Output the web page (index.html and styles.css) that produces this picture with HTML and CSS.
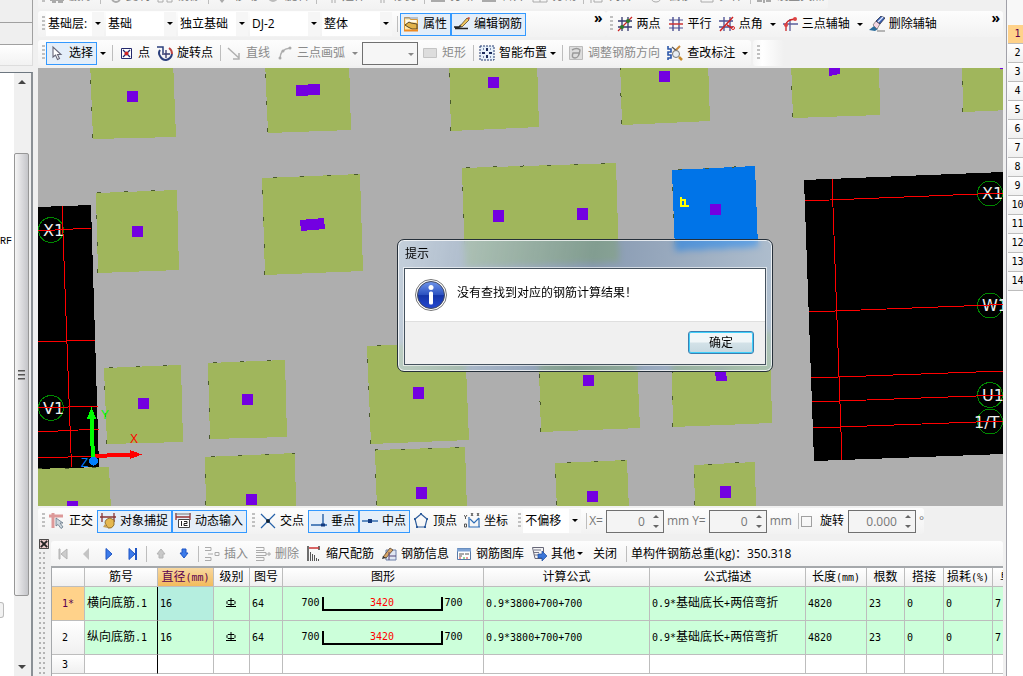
FILE: index.html
```html
<!DOCTYPE html>
<html lang="zh-CN">

<head>
    <meta charset="UTF-8">
    <meta name="viewport" content="width=device-width, initial-scale=1.0">
    <title>编辑钢筋</title>
    <link rel="stylesheet" href="styles.css">
</head>

<body>
    <div class="app">
        <aside class="side">
            <div class="side-head"></div>
            <div class="side-head"></div>
            <div class="side-head light"></div>
            <div class="side-body">
                <div class="side-list"><span>RF</span><i></i></div>
                <div class="scroll">
                    <span class="tri up"></span>
                    <div class="thumb"><i></i><i></i><i></i></div>
                    <span class="tri down"></span>
                </div>
            </div>
        </aside>

        <main class="main">
            <!-- modify tools -->
            <div class="bar-row first">
                <div class="toolbar dim">
                    <span class="grip"></span>
                    <button class="tool"><svg class="icon" viewBox="0 0 16 16"><path d="M1 12h14M3 14h4M9 14h5" stroke="#aaa" stroke-width="2"/></svg>删除</button>
                    <span class="sep"></span>
                    <button class="tool"><svg class="icon" viewBox="0 0 16 16"><circle cx="10" cy="10" r="4" fill="none" stroke="#aaa" stroke-width="2"/></svg>复制</button>
                    <button class="tool"><svg class="icon" viewBox="0 0 16 16"><path d="M1 7h5v7H1zM10 7h5v7h-5z" fill="none" stroke="#aaa"/></svg>镜像</button>
                    <span class="sep"></span>
                    <button class="tool"><svg class="icon" viewBox="0 0 16 16"><path d="M4 10h8l-4 5z" fill="#aaa"/></svg>移动</button>
                    <button class="tool"><svg class="icon" viewBox="0 0 16 16"><circle cx="8" cy="9" r="5" fill="#bbb"/></svg>旋转</button>
                    <span class="sep"></span>
                    <button class="tool"><svg class="icon" viewBox="0 0 16 16"><path d="M10 2v13M13 2v13" stroke="#aaa"/></svg>延伸</button>
                    <button class="tool"><svg class="icon" viewBox="0 0 16 16"><path d="M8 2v13M11 2v13" stroke="#aaa"/></svg>修剪</button>
                    <span class="sep"></span>
                    <button class="tool"><svg class="icon" viewBox="0 0 16 16"><path d="M1 13h14" stroke="#aaa" stroke-width="2"/></svg>打断</button>
                    <button class="tool"><svg class="icon" viewBox="0 0 16 16"><path d="M1 13h14" stroke="#aaa" stroke-width="2"/></svg>合并</button>
                    <button class="tool"><svg class="icon" viewBox="0 0 16 16"><path d="M1 8h14v6H1zM8 8v6" fill="none" stroke="#aaa"/></svg>分割</button>
                    <span class="sep"></span>
                    <button class="tool"><svg class="icon" viewBox="0 0 16 16"><path d="M2 2v13M5 6h8v8H5z" fill="none" stroke="#aaa"/></svg>对齐</button>
                    <span class="space"></span>
                    <button class="tool"><svg class="icon" viewBox="0 0 16 16"><path d="M3 8q0 6 5 6t5-6" fill="none" stroke="#aaa"/></svg>偏移</button>
                    <button class="tool"><svg class="icon" viewBox="0 0 16 16"><path d="M2 6h12v8H2z" fill="none" stroke="#aaa"/></svg>拉伸</button>
                    <span class="sep"></span>
                    <button class="tool"><svg class="icon" viewBox="0 0 16 16"><path d="M1 13h5M10 13h5M8 8v7" stroke="#aaa" stroke-width="2"/></svg>设置夹点</button>
                </div>
            </div>

            <!-- component selection and auxiliary axes -->
            <div class="bar-row">
                <div class="toolbar wide-left">
                    <span class="grip"></span>
                    <span class="combo short"><select aria-label="楼层"><option>基础层:</option></select></span>
                    <span class="combo"><select aria-label="构件类别"><option>基础</option></select></span>
                    <span class="combo"><select aria-label="构件类型"><option>独立基础</option></select></span>
                    <span class="combo"><select aria-label="构件名称"><option>DJ-2</option></select></span>
                    <span class="combo"><select aria-label="单元"><option>整体</option></select></span>
                    <span class="sep"></span>
                    <button class="tool on"><svg class="icon" viewBox="0 0 16 16"><path d="M1.500 1.500h5l1 2h7v11h-13z" fill="#ffe9b0" stroke="#d79a3c"/><path d="M1 2h14" stroke="#8a94a4"/><path d="M3 5h10M3 7h4" stroke="#fff" stroke-width="1.500"/><path d="M2 9l4-3 2 1 6 1v5H9L5 11z" fill="#e2b34a" stroke="#5a4520"/><path d="M1 14.500h14" stroke="#ef8a20" stroke-width="2"/></svg>属性</button>
                    <button class="tool on"><svg class="icon" viewBox="0 0 16 16"><path d="M0 11h5l2-2M1 12.500h13" stroke="#222" stroke-width="1.500" fill="none"/><path d="M6 10l7-8 2 2-7 7z" fill="#f2c65c" stroke="#5b4a2a" stroke-width=".8"/><path d="M13 2l2 2 1-2-1-1z" fill="#c8503c"/><path d="M6 10l-1 2 3-1z" fill="#333"/></svg>编辑钢筋</button>
                    <button class="more" aria-label="更多">»</button>
                </div>
                <div class="toolbar wide-right">
                    <span class="grip"></span>
                    <button class="tool"><svg class="icon" viewBox="0 0 16 16"><path d="M5 1v14M11 1v14M1 5h14M1 11h14" stroke="#33386e" stroke-width="1.300"/><path d="M1 15L15 1" stroke="#c22" stroke-width="1.200"/><circle cx="5" cy="11" r="2" fill="#2a7a2a"/><circle cx="11" cy="5" r="2" fill="#2a7a2a"/></svg>两点</button>
                    <button class="tool"><svg class="icon" viewBox="0 0 16 16"><path d="M5 1v14M11 1v14" stroke="#4a4f92" stroke-width="1.400"/><path d="M1 4h14M1 12h14" stroke="#4a4f92"/><path d="M1 8h14" stroke="#c33" stroke-width="1.500"/></svg>平行</button>
                    <button class="tool"><svg class="icon" viewBox="0 0 16 16"><path d="M5 1v14M11 1v14M0 5h14M0 11h14" stroke="#4a4f92" stroke-width="1.300"/><path d="M1 15L14 1M8 9l5 3" stroke="#c22" stroke-width="1.500"/><circle cx="14" cy="12" r="1.500" fill="none" stroke="#d22"/></svg>点角</button>
                    <button class="drop" aria-label="点角选项"></button>
                    <button class="tool"><svg class="icon" viewBox="0 0 16 16"><path d="M8 3v12M1 8h15" stroke="#5a5f9a" stroke-width="1.300"/><path d="M4 15V9q0-5 9-6" stroke="#c22" stroke-width="1.300" fill="none"/><circle cx="4" cy="9" r="2" fill="#d44"/><circle cx="13" cy="3" r="2" fill="#d44"/></svg>三点辅轴</button>
                    <button class="drop" aria-label="三点辅轴选项"></button>
                    <button class="tool"><svg class="icon" viewBox="0 0 16 16"><path d="M0 14l5-4 4 3-3 2z" fill="#2b6d9c"/><path d="M4 9l3-4 4 3-3 5z" fill="#f3d6e2" stroke="#666" stroke-width=".7"/><path d="M7 5l5-5 4 2-5 6z" fill="#3b62b5" stroke="#223" stroke-width=".7"/><path d="M9 6l5-5" stroke="#dfe9ff" stroke-width="1.500"/><path d="M8 15h8" stroke="#777"/></svg>删除辅轴</button>
                    <button class="more" aria-label="更多">»</button>
                </div>
            </div>

            <!-- drawing tools -->
            <div class="bar-row draw">
                <div class="toolbar">
                    <span class="grip"></span>
                    <button class="tool on"><svg class="icon" viewBox="0 0 16 16"><path d="M4 2v10l2.500-2 2 4.500 2-1-2-4H12z" fill="#fff" stroke="#667" stroke-width="1.100"/></svg>选择</button>
                    <button class="drop" aria-label="选择选项"></button>
                    <span class="sep"></span>
                    <button class="tool"><svg class="icon" viewBox="0 0 16 16"><path d="M3.500 3.500h10v10h-10z" fill="#fff" stroke="#23286c"/><path d="M5 5l7 7M12 5l-7 7" stroke="#23286c" stroke-width="1.300"/><circle cx="8.500" cy="8.500" r="2" fill="#c22"/></svg>点</button>
                    <button class="tool"><svg class="icon" viewBox="0 0 16 16"><path d="M3 5q-2 3 0 6 2 4 6 4 5-1 6-6" fill="none" stroke="#2a3f7c" stroke-width="2"/><path d="M12 3q3 2 3 6" fill="none" stroke="#b44" stroke-width="2"/><path d="M0 2h6v6" fill="none" stroke="#2a3f7c" stroke-width="1.500"/><path d="M9 5v8M5 9h8" stroke="#33386e" stroke-width="1.300"/></svg>旋转点</button>
                    <span class="sep"></span>
                    <button class="tool off"><svg class="icon" viewBox="0 0 16 16"><path d="M2 3l11 10M13 8v6H7" stroke="#b0b0b0" stroke-width="1.500" fill="none"/></svg>直线</button>
                    <button class="tool off"><svg class="icon" viewBox="0 0 16 16"><path d="M3 14q0-10 10-11" stroke="#b0b0b0" stroke-width="1.500" fill="none"/><circle cx="3" cy="13" r="1.500" fill="#aaa"/><circle cx="6" cy="6" r="1.500" fill="#aaa"/><circle cx="13" cy="3" r="1.500" fill="#aaa"/></svg>三点画弧</button>
                    <button class="drop off" aria-label="画弧选项" disabled></button>
                    <span class="combo boxed"><select aria-label="半径" disabled><option></option></select></span>
                    <button class="tool off"><svg class="icon" viewBox="0 0 16 16"><path d="M1.500 3.500h13v9h-13z" fill="#ddd" stroke="#c4c4c4"/></svg>矩形</button>
                    <span class="sep"></span>
                    <button class="tool tight"><svg class="icon" viewBox="0 0 16 16"><path d="M1 1h14v14H1z" fill="#e6f0fa" stroke="#223a70" stroke-dasharray="2 1"/><path d="M8 3v3M8 10v3M3 8h3M10 8h3" stroke="#1b2a5c" stroke-width="2"/><path d="M4 4h1M11 4h1M4 12h1M11 12h1" stroke="#1b2a5c"/></svg>智能布置</button>
                    <button class="drop slim" aria-label="智能布置选项"></button>
                    <span class="sep"></span>
                    <button class="tool off"><svg class="icon" viewBox="0 0 16 16"><path d="M1.500 1.500h13v13h-13z" fill="#ddd" stroke="#bbb"/><path d="M4 5q5-3 8 0-1 8-5 8T5 8h7" fill="none" stroke="#999" stroke-width="1.500"/></svg>调整钢筋方向</button>
                    <button class="tool"><svg class="icon" viewBox="0 0 16 16"><path d="M1 1v3h3v3H1v3h3v3H1v2" fill="none" stroke="#2a56a8" stroke-width="1.600"/><path d="M13 1L6 8" stroke="#c88a3c" stroke-width="2"/><path d="M5 2l6 5" stroke="#555" stroke-width="1.300"/><circle cx="9" cy="9" r="3.500" fill="#e8eef4" stroke="#777"/><path d="M12 12l3 3" stroke="#c78b2c" stroke-width="2.500"/></svg>查改标注</button>
                    <button class="drop" aria-label="查改标注选项"></button>
                </div>
                <div class="toolbar stub"><span class="grip"></span></div>
            </div>

            <div class="canvas">
                <svg class="model" viewBox="38 68 965 438" preserveAspectRatio="xMinYMin slice">
                    <g class="void">
                        <path d="M38 207L91 205L99 467L38 469Z"/>
                        <path d="M804 180L1003 172V454L814 461Z"/>
                    </g>
                    <g class="footing">
                        <path d="M90 60H173L176 137L93 139Z"/>
                        <path d="M265 60H349L351 130L268 133Z"/>
                        <path d="M449 60H537L539 127L451 131Z"/>
                        <path d="M620 60H708L710 121L622 125Z"/>
                        <path d="M791 60H879L880 115L793 118Z"/>
                        <path d="M962 60H1010V110L963 112Z"/>
                        <path d="M96 193L177 190L179 270L98 273Z"/>
                        <path d="M262 178L360 174L363 271L265 275Z"/>
                        <path d="M462 168L616 163L619 262L465 267Z"/>
                        <path d="M104 368L181 365L183 442L107 444Z"/>
                        <path d="M208 363L285 360L287 437L210 439Z"/>
                        <path d="M367 346L465 342L469 440L371 444Z"/>
                        <path d="M538 340L636 336L640 428L541 432Z"/>
                        <path d="M671 335L770 332L772 423L673 427Z"/>
                        <path d="M30 469L109 467L111 510H30Z"/>
                        <path d="M205 457L295 453L296 510H206Z"/>
                        <path d="M375 450L465 447L467 510H377Z"/>
                        <path d="M555 463L627 460L629 510H557Z"/>
                        <path d="M694 465L755 462L756 510H695Z"/>
                    </g>
                    <path class="picked" d="M672 170L755 166L758 247L675 251Z"/>
                    <g class="edge">
                        <path d="M93 138L90 68M268 132L265 68M451 131L449 68M622 124L620 68M793 117L791 68M963 112L962 68"/>
                        <path d="M98 273L96 193L177 190M265 275L262 178L360 174M465 245L462 168L616 163M675 245L672 170L755 166"/>
                        <path d="M107 444L104 368L181 365M210 439L208 363L285 360M371 444L367 346L465 342M541 432L539 371M673 427L672 371"/>
                        <path d="M38 469L109 467M206 505L205 457L295 453M377 505L375 450L465 447M557 505L555 463L627 460M695 505L694 465L755 462"/>
                    </g>
                    <g class="column">
                        <path d="M127 91h11v11h-11zM296 85l24-1v11l-24 1zM488 77h11v11h-11zM659 71h11v11h-11zM829 66h11v8l-11 2zM1000 66h5v3h-5z"/>
                        <path d="M132 226h11v11h-11zM300 220l24-2 1 11-24 2zM493 210h11v12h-11zM577 208h11v12h-11zM710 204h11v11h-11z"/>
                        <path d="M138 398h11v11h-11zM242 394h11v11h-11zM413 387h11v12h-11zM583 375h11v11h-11zM715 371h11l1 10h-11z"/>
                        <path d="M67 501h11v9H67zM246 494h11v11h-11zM416 487h11v12h-11zM587 491h11v11h-11zM720 486h11v12h-11z"/>
                    </g>
                    <g class="bubble">
                        <circle cx="51" cy="230" r="12.500"/><circle cx="51" cy="408" r="12.500"/>
                        <circle cx="990" cy="193.500" r="12.500"/><circle cx="990" cy="305.500" r="12.500"/>
                        <circle cx="990" cy="395" r="12.500"/><circle cx="990" cy="421.500" r="12.500"/>
                    </g>
                    <g class="axis-name">
                        <text x="43" y="236">X1</text><text x="43" y="414">V1</text>
                        <text x="982" y="199">X1</text><text x="982" y="311">W1</text>
                        <text x="982" y="401">U1</text><text x="974" y="428">1/T</text>
                    </g>
                    <g class="axis">
                        <path d="M62 206L71.500 467M38 231L91 228M38 342L95 340M38 408L98 406M38 432L99 429M38 458L99 456"/>
                        <path d="M832 179L842 460M805 201L1003 193M809 312L1003 304.500M811 378L1003 371M812 402L1003 395M813 428L1003 421"/>
                    </g>
                    <path class="hook" d="M681 197v9h8M681 200h4v6"/>
                    <path d="M93 460L91.500 417" stroke="#0f0" stroke-width="4"/>
                    <path d="M91.500 407l4.500 11.500h-9z" fill="#0f0"/>
                    <path d="M95 456L131 454.500" stroke="#f00" stroke-width="4"/>
                    <path d="M130 450l12 4.500-12 4.500z" fill="#f00"/>
                    <circle cx="93.500" cy="461" r="4.500" fill="#0080ff"/>
                    <g class="ucs">
                        <text x="101" y="419" fill="#0f0">Y</text>
                        <text x="130" y="443" fill="#f00">X</text>
                        <text x="81" y="467" fill="#0080ff">Z</text>
                    </g>
                </svg>

                <section class="dialog" role="dialog" aria-labelledby="dlg-title">
                    <h1 id="dlg-title">提示</h1>
                    <div class="dialog-inner">
                        <div class="dialog-msg">
                            <svg class="info" viewBox="0 0 32 32">
                                <defs><linearGradient id="blue" x1="0" y1="0" x2="0" y2="1"><stop offset="0" stop-color="#6f95ea"/><stop offset=".5" stop-color="#2a50c0"/><stop offset=".52" stop-color="#1434a8"/><stop offset="1" stop-color="#2448d0"/></linearGradient></defs>
                                <circle cx="16" cy="16" r="15.500" fill="#fff" stroke="#777"/>
                                <circle cx="16" cy="16" r="13.500" fill="url(#blue)" stroke="#444b60"/>
                                <circle cx="16" cy="8.500" r="2.500" fill="#fff"/>
                                <rect x="14" y="12.500" width="4" height="13" rx="1.500" fill="#fff"/>
                            </svg>
                            <p>没有查找到对应的钢筋计算结果！</p>
                        </div>
                        <div class="dialog-foot"><button class="ok">确定</button></div>
                    </div>
                </section>
            </div>

            <!-- snap and coordinate input -->
            <div class="bar-row snap">
                <div class="toolbar">
                    <span class="grip"></span>
                    <button class="tool"><svg class="icon" viewBox="0 0 16 16"><path d="M0 3h14M4 0v15" stroke="#d99" stroke-width="3"/><path d="M7 5v8l2-1.500 3 4 2-1.500-3-4h3z" fill="#cdd6dc" stroke="#678" stroke-width=".8"/></svg>正交</button>
                    <button class="tool on"><svg class="icon" viewBox="0 0 16 16"><path d="M2 0v9M14 0v9M0 4h16" stroke="#833" stroke-width="1.300"/><path d="M5 10q0-4 5-5l4 2v5q-2 4-6 3z" fill="#e5b850" stroke="#7a5a20" stroke-width=".8"/><path d="M5 11l-2 3 5 1z" fill="#c9a050"/></svg>对象捕捉</button>
                    <button class="tool on"><svg class="icon" viewBox="0 0 16 16"><path d="M1 0v7M15 0v7M1 4h14" stroke="#933" stroke-width="1.300"/><path d="M0 1h16" stroke="#777"/><path d="M3.500 6.500h11v8h-11z" fill="#fff" stroke="#444"/><path d="M6.500 8v5M9 8.500h3v2H9v2h3.500" stroke="#222" fill="none"/></svg>动态输入</button>
                    <span class="grip second"></span>
                    <button class="tool"><svg class="icon" viewBox="0 0 16 16"><path d="M1 1l14 14M15 1L1 15" stroke="#2560a8" stroke-width="1.200"/><circle cx="8" cy="8" r="2" fill="#123"/></svg>交点</button>
                    <button class="tool on"><svg class="icon" viewBox="0 0 16 16"><path d="M0 12h16M12 1v11" stroke="#2560a8" stroke-width="1.400"/><path d="M10 10.500h4v3h-4z" fill="#123a80"/></svg>垂点</button>
                    <button class="tool on"><svg class="icon" viewBox="0 0 16 16"><path d="M0 8h16" stroke="#2560a8" stroke-width="1.400"/><path d="M6 6h4v4H6z" fill="#123a80"/></svg>中点</button>
                    <button class="tool"><svg class="icon" viewBox="0 0 16 16"><path d="M8 1l6 5-2 8H4L2 6z" fill="none" stroke="#2f5d9c" stroke-width="1.200"/><path d="M7 0h2v2H7zM1 5h2v2H1zM13 5h2v2h-2zM3 13h2v2H3zM11 13h2v2h-2z" fill="#2f5d9c"/></svg>顶点</button>
                    <button class="tool"><svg class="icon" viewBox="0 0 16 16"><path d="M5 4v10h11M6 6l4 4 5-5M15 5v9" fill="none" stroke="#2d6db5" stroke-width="1.200"/><path d="M0 2l1.500 2L3 2M1.500 4v2M.5 11h2v3h-2zM7 0l2 3M9 0L7 3M13 0l2 3M15 0l-2 3" fill="none" stroke="#555"/></svg>坐标</button>
                    <span class="grip third"></span>
                    <span class="combo offset"><select aria-label="偏移方式"><option>不偏移</option></select></span>
                    <span class="sep"></span>
                    <label class="field">X=<span class="spin"><input type="text" value="0"></span>mm</label>
                    <label class="field">Y=<span class="spin"><input type="text" value="0"></span>mm</label>
                    <span class="sep"></span>
                    <label class="check"><input type="checkbox">旋转</label>
                    <label class="field last"><span class="spin wide"><input type="text" value="0.000" aria-label="旋转角度"></span>°</label>
                </div>
            </div>

            <div class="bottom">
                <div class="handle">
                    <button class="close" aria-label="关闭"><svg viewBox="0 0 11 11"><path d="M.5 .5h10v10H.5z" fill="#e8c8c8" stroke="#333"/><path d="M2 2l7 7M9 2L2 9" stroke="#222" stroke-width="2"/></svg></button>
                    <span class="dots"></span>
                </div>
                <div class="rebar">
                    <div class="toolbar edit">
                        <button class="nav" aria-label="首条"><svg class="icon" viewBox="0 0 16 16"><path d="M4 3v10h1V3zM12 3v10L6 8z" fill="#ccc" stroke="#b4b4b4"/></svg></button>
                        <button class="nav" aria-label="上一条"><svg class="icon" viewBox="0 0 16 16"><path d="M11 2v12L5 8z" fill="#c4c4c4"/></svg></button>
                        <button class="nav" aria-label="下一条"><svg class="icon" viewBox="0 0 16 16"><path d="M5 2.500v11L11 8z" fill="#3c7bea" stroke="#1e55c4"/></svg></button>
                        <button class="nav" aria-label="末条"><svg class="icon" viewBox="0 0 16 16"><path d="M5 2.500v11L11 8z" fill="#3c7bea" stroke="#1e55c4"/><path d="M12 2v12" stroke="#1e55c4" stroke-width="2"/></svg></button>
                        <span class="sep"></span>
                        <button class="nav" aria-label="上移"><svg class="icon" viewBox="0 0 16 16"><path d="M8 3l4 5h-2v4H6V8H4z" fill="#c8c8c8" stroke="#b4b4b4"/></svg></button>
                        <button class="nav" aria-label="下移"><svg class="icon" viewBox="0 0 16 16"><path d="M8 12l4-5h-2V3H6v4H4z" fill="#3c7bea" stroke="#1e55c4"/></svg></button>
                        <span class="sep"></span>
                        <button class="tool off"><svg class="icon" viewBox="0 0 16 16"><path d="M1 1.500h6v3H1M1 11.500h6v3H1M4 8h5M11 6.500h4v3h-4z" fill="none" stroke="#aaa"/></svg>插入</button>
                        <button class="tool off"><svg class="icon" viewBox="0 0 16 16"><path d="M1 1.500h8v3H1M1 6.500h10v3H1M1 11.500h8v3H1M11 8h5M14 6v4" fill="none" stroke="#aaa"/></svg>删除</button>
                        <button class="tool"><svg class="icon" viewBox="0 0 16 16"><path d="M2 0v15M13 0v4" stroke="#222" stroke-width="1.300"/><path d="M3 2h10" stroke="#c33" stroke-width="1.300"/><path d="M4.500 6v9M6.500 8v7M8.500 9v6M10.500 12v3M12.500 13v2" stroke="#555"/></svg>缩尺配筋</button>
                        <button class="tool"><svg class="icon" viewBox="0 0 16 16"><path d="M5 4h10v10H5z" fill="#dfe6f2" stroke="#6a7fa8"/><path d="M2 11l7-9 3 2-7 8z" fill="#d9a565" stroke="#543" stroke-width=".8"/><path d="M8 6v8M8 10h7" stroke="#547"/><path d="M1 13l1-3 3 2z" fill="#333"/></svg>钢筋信息</button>
                        <button class="tool"><svg class="icon" viewBox="0 0 16 16"><path d="M1.500 2.500h13v11h-13z" fill="#fff" stroke="#5578a8"/><path d="M1 4h14" stroke="#7fa3d4" stroke-width="3"/><path d="M3 8h5M3 10h3M9 8h4" stroke="#555"/><path d="M3 12h2M10 12h2" stroke="#d33"/><path d="M7 12h2" stroke="#3a3"/></svg>钢筋图库</button>
                        <button class="tool tight"><svg class="icon" viewBox="0 0 16 16"><path d="M1.500 1.500h11v11H4z" fill="#f4f4f4" stroke="#667"/><path d="M3 4h7M3 6.500h5M3 9h4" stroke="#778"/><path d="M7 8h4V5l5 5-5 5v-3H7z" fill="#3b76d8" stroke="#1d4a9c" stroke-width=".7"/></svg>其他</button>
                        <button class="drop slim" aria-label="其他选项"></button>
                        <button class="tool plain">关闭</button>
                        <span class="sep"></span>
                        <span class="total">单构件钢筋总重(kg)：350.318</span>
                    </div>

                    <div class="grid">
                        <table>
                            <colgroup>
                                <col class="w-no"><col class="w-name"><col class="w-dia"><col class="w-grade"><col class="w-fig"><col class="w-shape"><col class="w-calc"><col class="w-desc"><col class="w-len"><col class="w-qty"><col class="w-lap"><col class="w-loss"><col class="w-wt">
                            </colgroup>
                            <thead>
                                <tr>
                                    <th></th>
                                    <th>筋号</th>
                                    <th class="sel">直径<span class="n">(mm)</span></th>
                                    <th>级别</th>
                                    <th>图号</th>
                                    <th>图形</th>
                                    <th>计算公式</th>
                                    <th>公式描述</th>
                                    <th>长度<span class="n">(mm)</span></th>
                                    <th>根数</th>
                                    <th>搭接</th>
                                    <th>损耗<span class="n">(%)</span></th>
                                    <th class="cut">单重</th>
                                </tr>
                            </thead>
                            <tbody>
                                <tr class="filled">
                                    <th class="sel"><span class="n">1*</span></th>
                                    <td>横向底筋<span class="n">.1</span></td>
                                    <td class="active"><span class="n">16</span></td>
                                    <td class="mid"><svg class="grade" viewBox="0 0 10 10"><path d="M2 2.500h6l1 1v2l-1 1H2l-1-1v-2zM5 0v9M0 8.500h10" fill="none" stroke="#000"/></svg></td>
                                    <td><span class="n">64</span></td>
                                    <td><div class="shape"><span class="n">700</span><span class="n leg">3420</span><span class="n">700</span></div></td>
                                    <td><span class="n">0.9*3800+700+700</span></td>
                                    <td><span class="n">0.9*</span>基础底长<span class="n">+</span>两倍弯折</td>
                                    <td><span class="n">4820</span></td>
                                    <td><span class="n">23</span></td>
                                    <td><span class="n">0</span></td>
                                    <td><span class="n">0</span></td>
                                    <td><span class="n">7</span></td>
                                </tr>
                                <tr class="filled">
                                    <th><span class="n">2</span></th>
                                    <td>纵向底筋<span class="n">.1</span></td>
                                    <td><span class="n">16</span></td>
                                    <td class="mid"><svg class="grade" viewBox="0 0 10 10"><path d="M2 2.500h6l1 1v2l-1 1H2l-1-1v-2zM5 0v9M0 8.500h10" fill="none" stroke="#000"/></svg></td>
                                    <td><span class="n">64</span></td>
                                    <td><div class="shape"><span class="n">700</span><span class="n leg">3420</span><span class="n">700</span></div></td>
                                    <td><span class="n">0.9*3800+700+700</span></td>
                                    <td><span class="n">0.9*</span>基础底长<span class="n">+</span>两倍弯折</td>
                                    <td><span class="n">4820</span></td>
                                    <td><span class="n">23</span></td>
                                    <td><span class="n">0</span></td>
                                    <td><span class="n">0</span></td>
                                    <td><span class="n">7</span></td>
                                </tr>
                                <tr class="blank">
                                    <th><span class="n">3</span></th>
                                    <td></td><td></td><td></td><td></td><td></td><td></td><td></td><td></td><td></td><td></td><td></td><td></td>
                                </tr>
                            </tbody>
                        </table>
                    </div>
                </div>
            </div>
        </main>

        <aside class="rows">
            <ol>
                <li class="sel">1</li><li>2</li><li>3</li><li>4</li><li>5</li><li>6</li><li>7</li>
                <li>8</li><li>9</li><li>10</li><li>11</li><li>12</li><li>13</li><li>14</li>
            </ol>
        </aside>
    </div>
</body>

</html>
```
FILE: styles.css
```css
* {
    box-sizing: border-box;
}

body {
    margin: 0;
    background-color: #f0f0f0;
    color: #000;
    font-family: "Open Sans", "Noto Sans CJK SC", sans-serif;
    font-size: 12px;
    line-height: 16px;
    overflow: hidden;
}

button,
input,
select {
    font: inherit;
    color: inherit;
    margin: 0;
    padding: 0;
    border: none;
    background: none;
    border-radius: 0;
}

.app {
    display: flex;
    height: 100vh;
}

/* left tree panel */
.side {
    width: 33px;
    margin-right: 5px;
    flex: none;
    display: flex;
    flex-direction: column;
}

.side-head {
    height: 22px;
    border-right: 1px solid #a0a0a0;
    border-bottom: 1px solid #a0a0a0;
    background: #efefef;
}

.side-head:first-child {
    height: 23px;
}

.side-head.light {
    height: 21px;
    border-color: #ddd;
    background: linear-gradient(#fff, #f2f2f2);
    margin-bottom: 6px;
}

.side-body {
    flex: 1;
    display: flex;
    border-top: 1px solid #6d7780;
    border-right: 2px solid #8b9095;
    background: #fff;
}

.side-list {
    flex: 1;
    display: flex;
    flex-direction: column;
    font: 10px/12px "Liberation Mono", monospace;
    padding-top: 163px;
    overflow: hidden;
}

.side-list i {
    width: 4px;
    height: 16px;
    margin-top: 354px;
    border: 1px solid #bbb;
    border-left: none;
    border-radius: 0 3px 3px 0;
    background: #f2f2f2;
}

.scroll {
    width: 17px;
    padding: 7px 2px 7px 0;
    background: #f0f0f0;
    display: flex;
    flex-direction: column;
    align-items: center;
}

.thumb {
    width: 15px;
    flex: 1;
    margin: 69px 0;
    border: 1px solid #979797;
    border-radius: 2px;
    background: linear-gradient(90deg, #f5f5f5, #dcdcdf 50%, #c4c5c9);
    display: flex;
    flex-direction: column;
    justify-content: center;
    align-items: center;
    gap: 2px;
}

.thumb i {
    width: 7px;
    height: 2px;
    background: #555;
    border-bottom: 1px solid #999;
}

.tri {
    border: 4px solid transparent;
}

.tri.up {
    border-top: none;
    border-bottom-color: #444;
}

.tri.down {
    border-bottom: none;
    border-top-color: #444;
}

/* main column */
.main {
    flex: 1;
    min-width: 0;
    display: flex;
    flex-direction: column;
}

.bar-row {
    display: flex;
    flex: none;
    margin-bottom: 3px;
    white-space: nowrap;
}

.bar-row.first {
    margin-top: -17px;
    margin-bottom: 2px;
}

.bar-row.draw {
    margin-bottom: 2px;
}

.toolbar {
    display: flex;
    align-items: center;
    height: 26px;
    border-radius: 3px;
    background: linear-gradient(#fdfdfd, #f2f2f2);
}

.toolbar.dim {
    color: #777;
}

.wide-left {
    flex: 567 1 0;
}

.wide-right {
    flex: 397 1 0;
}

.stub {
    width: 31px;
    margin-left: 2px;
    background: linear-gradient(90deg, #f6f6f6, #fff 30%, #f0f0f0);
}

.grip {
    width: 3px;
    height: 16px;
    margin: 0 1px 0 4px;
    flex: none;
    background: repeating-linear-gradient(#c0c0c0 0 2px, transparent 2px 4px);
}

.grip.second {
    margin: 0 2px 0 5px;
}

.grip.third {
    margin: 0 2px 0 6px;
}

.sep {
    width: 1px;
    height: 16px;
    margin: 0 2px 0 3px;
    flex: none;
    background: #bdbdbd;
}

.space {
    width: 8px;
}

.tool {
    display: flex;
    align-items: center;
    gap: 4px;
    height: 23px;
    padding: 0 4px 0 3px;
    flex: none;
}

.tool.on {
    padding: 0 3px 0 2px;
    border: 1px solid #3399ff;
    background: #e4eef9;
}

.tool.off {
    color: #8a8a8a;
}

.tool.tight {
    padding-right: 0;
}

.tool.plain {
    padding: 0 6px 0 8px;
}

.icon {
    width: 16px;
    height: 16px;
    display: block;
    flex: none;
}

.drop {
    width: 12px;
    height: 23px;
    display: flex;
    align-items: center;
    justify-content: center;
}

.drop::before {
    content: "";
    border: 3px solid transparent;
    border-top-color: #000;
    border-bottom: none;
}

.drop.off::before {
    border-top-color: #888;
}

.draw .slim {
    width: 12px;
}

.more {
    margin: 0 3px 12px auto;
    font-size: 14px;
    line-height: 14px;
    font-weight: bold;
}

/* drop-down lists */
.combo {
    position: relative;
    width: 70px;
    height: 24px;
    margin-right: 2px;
    flex: none;
    background: linear-gradient(90deg, #fff calc(100% - 12px), #f6f6f6 0);
}

.combo.short {
    width: 58px;
}

.combo::after {
    content: "";
    position: absolute;
    right: 3px;
    top: 10px;
    border: 3px solid transparent;
    border-top-color: #000;
    border-bottom: none;
}

.combo select {
    appearance: none;
    width: 100%;
    height: 100%;
    padding: 0 13px 0 2px;
    opacity: 1;
}

.combo.boxed {
    width: 56px;
    height: 23px;
    border: 1px solid #707070;
    background: #f6f6f6;
    margin: 0 1px;
}

.combo.boxed::after {
    border-top-color: #888;
}

.combo.offset {
    width: 58px;
}

/* drawing area */
.canvas {
    position: relative;
    flex: 1;
    min-height: 0;
    background: #aeaeae;
    overflow: hidden;
}

.model {
    display: block;
    width: 100%;
    height: 100%;
    shape-rendering: crispEdges;
}

.void {
    fill: #000;
}

.footing {
    fill: #a0b65c;
}

.picked {
    fill: #0074e8;
}

.column {
    fill: #7300e1;
}

.edge {
    fill: none;
    stroke: #4a5a2c;
    stroke-dasharray: 4 23;
}

.bubble {
    fill: none;
    stroke: #080;
}

.axis {
    stroke: #f00;
}

.hook {
    fill: none;
    stroke: #ff0;
    stroke-width: 2;
}

.axis-name {
    fill: #eee;
    font-family: "DejaVu Sans", sans-serif;
    font-size: 16px;
}

.ucs {
    font-family: "Liberation Sans", sans-serif;
    font-size: 12px;
}

/* message box */
.dialog {
    position: absolute;
    left: 359px;
    top: 171px;
    width: 376px;
    padding: 0 6px 6px;
    border: 1px solid #26303a;
    border-radius: 7px;
    background: linear-gradient(100deg, rgba(205, 220, 235, .75), rgba(110, 140, 180, .6) 50%, rgba(180, 205, 230, .6));
    box-shadow: inset 0 0 0 1px rgba(255, 255, 255, .75);
    backdrop-filter: blur(3px);
}

.dialog h1 {
    margin: 0;
    padding: 6px 0 6px 1px;
    font-size: 12px;
    line-height: 16px;
    font-weight: normal;
}

.dialog-inner {
    border: 1px solid #45525e;
    box-shadow: 0 0 0 1px rgba(255, 255, 255, .6);
    background: #fff;
}

.dialog-msg {
    display: flex;
    padding: 10px;
    gap: 10px;
}

.dialog-msg p {
    margin: 6px 0 0;
}

.info {
    width: 32px;
    height: 32px;
    shape-rendering: auto;
}

.dialog-foot {
    display: flex;
    justify-content: flex-end;
    padding: 9px 11px 10px;
    border-top: 1px solid #dfdfdf;
    background: #f0f0f0;
}

.ok {
    width: 66px;
    height: 23px;
    border: 1px solid #3c7fb1;
    border-radius: 3px;
    background: linear-gradient(#f0f6f8 48%, #d3e2e8 52%, #c6d8e0);
    box-shadow: inset 0 0 0 1px #3fd0fb;
}

/* snap bar */
.snap {
    margin: 2px 0 5px;
}

.field {
    display: flex;
    align-items: center;
    gap: 3px;
    margin-right: 3px;
    color: #777;
}

.field.last {
    margin-right: 0;
}

.spin {
    position: relative;
    width: 58px;
    height: 23px;
    border: 1px solid #707070;
    background: #f4f4f4;
}

.spin.wide {
    width: 68px;
}

.spin input {
    width: 100%;
    height: 100%;
    padding-right: 18px;
    text-align: right;
}

.spin::before,
.spin::after {
    content: "";
    position: absolute;
    right: 4px;
    border: 3px solid transparent;
}

.spin::before {
    top: 4px;
    border-top: none;
    border-bottom-color: #666;
}

.spin::after {
    bottom: 4px;
    border-bottom: none;
    border-top-color: #666;
}

.check {
    display: flex;
    align-items: center;
    gap: 8px;
    margin: 0 4px 0 0;
}

.check input {
    appearance: none;
    width: 11px;
    height: 11px;
    border: 1px solid #a0a0a0;
}

/* rebar editor */
.bottom {
    display: flex;
    flex: none;
}

.handle {
    width: 13px;
    flex: none;
    display: flex;
    flex-direction: column;
    padding-left: 1px;
}

.close svg {
    display: block;
    width: 10px;
    height: 10px;
}

.dots {
    flex: 1;
    width: 8px;
    margin-top: 3px;
    background: radial-gradient(circle at 1px 1px, #b4b4b4 1px, transparent 1px) 0 0 / 4px 5px;
}

.rebar {
    flex: 1;
    min-width: 0;
    padding-top: 2px;
}

.toolbar.edit {
    height: 25px;
    white-space: nowrap;
    overflow: hidden;
}

.nav {
    width: 23px;
    height: 23px;
    display: flex;
    align-items: center;
    justify-content: center;
    flex: none;
}

.slim {
    width: 10px;
}

.total {
    padding-left: 2px;
}

.grid {
    overflow: hidden;
    border-top: 2px solid #a5a8ab;
    border-left: 1px solid #a5a8ab;
    background: #fff;
    padding-bottom: 2px;
}

table {
    width: 980px;
    border-collapse: separate;
    border-spacing: 0;
    table-layout: fixed;
}

.w-no { width: 33px; }
.w-name { width: 73px; }
.w-dia { width: 56px; }
.w-grade { width: 36px; }
.w-fig { width: 33px; }
.w-shape { width: 201px; }
.w-calc { width: 166px; }
.w-desc { width: 156px; }
.w-len { width: 61px; }
.w-qty { width: 38px; }
.w-lap { width: 39px; }
.w-loss { width: 49px; }
.w-wt { width: 39px; }

th,
td {
    padding: 0 0 0 2px;
    height: 34px;
    border-right: 1px solid #bdbdbd;
    border-bottom: 1px solid #bdbdbd;
    font-weight: normal;
    text-align: left;
    white-space: nowrap;
    overflow: hidden;
}

th {
    padding: 0;
    text-align: center;
    background: linear-gradient(#fff, #f0f0f0);
}

tbody th {
    padding-right: 6px;
}

thead th,
.blank th,
.blank td {
    height: 19px;
}

th.sel {
    color: #5a0050;
    background: #ffd28a;
}

tbody th.sel {
    padding-right: 0;
}

thead th.sel {
    background: linear-gradient(#f8d8a0, #f2bb5c);
}

th.cut {
    padding-left: 7px;
    text-align: left;
}

.filled td {
    background: #ccffda;
}

.filled td.active {
    background: #b5eedf;
}

tbody td:nth-child(2) {
    border-right-color: #000;
}

td.mid {
    padding: 0 2px 2px 0;
    text-align: center;
}

/* latin glyphs are half the width of the hanzi */
.n {
    font-family: "DejaVu Sans Mono", monospace;
    font-size: 10px;
}

.grade {
    width: 10px;
    height: 10px;
    vertical-align: middle;
}

.shape {
    display: flex;
    justify-content: center;
    gap: 2px;
    padding-right: 4px;
    line-height: 12px;
}

.leg {
    width: 121px;
    height: 14px;
    border: 2px solid #000;
    border-top: none;
    color: #f00;
    text-align: center;
}

/* right row numbers */
.rows {
    width: 17px;
    margin-left: 3px;
    flex: none;
    border-left: 1px solid #a0a0a8;
    background: #fff;
    overflow: hidden;
}

.rows ol {
    width: 20px;
    margin: 0;
    padding: 25px 0 0 1px;
    list-style: none;
    background: #f8f8f8;
}

.rows li {
    height: 19px;
    border-bottom: 1px solid #bdbdbd;
    background: linear-gradient(#fff, #f0f0f0);
    font: 10px/18px "DejaVu Sans Mono", monospace;
    text-align: center;
}

.rows li.sel {
    color: #5a0050;
    background: #ffd28a;
}
```
